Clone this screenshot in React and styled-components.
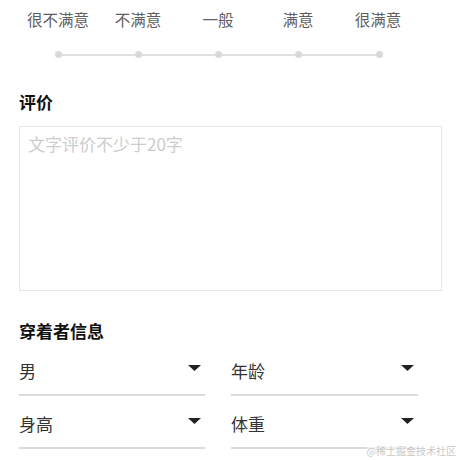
import React from "react";
import styled, { createGlobalStyle } from "styled-components";

const GlobalStyle = createGlobalStyle`
  html, body {
    margin: 0;
    padding: 0;
    background: #fff;
    font-family: "Noto Sans CJK SC", "Noto Sans", sans-serif;
  }
`;

const Page = styled.div`
  position: relative;
  width: 460px;
  height: 460px;
  box-sizing: border-box;
  padding: 7px 18px 0 19px;
  overflow: hidden;
`;

const Rating = styled.div`
  width: 400px;
`;

const Labels = styled.div`
  display: grid;
  grid-template-columns: repeat(5, 80px);
  margin-left: -1px;
`;

const Label = styled.span`
  text-align: center;
  font-size: 15.5px;
  line-height: 24px;
  color: #5e5e5e;
`;

const Track = styled.div`
  display: flex;
  align-items: center;
  margin: 20px 36.5px 0 35.5px;
`;

const Dot = styled.span`
  width: 7px;
  height: 7px;
  border-radius: 50%;
  background: #d9d9d9;
  flex: none;
`;

const Segment = styled.span`
  flex: 1;
  height: 2px;
  background: #e0e0e0;
`;

const SectionTitle = styled.h3`
  margin: ${(p) => p.$top}px 0 0;
  font-size: 17px;
  line-height: 24px;
  font-weight: 700;
  color: #111;
`;

const Comment = styled.textarea`
  display: block;
  box-sizing: border-box;
  width: 423px;
  height: 165px;
  margin-top: 12px;
  padding: 4px 8px;
  border: 1.5px solid #e6e6e6;
  border-radius: 0;
  resize: none;
  outline: none;
  font-family: "Noto Sans CJK SC", "Noto Sans", sans-serif;
  font-size: 17px;
  line-height: 26px;
  color: #333;
  &::placeholder {
    color: #cdcdcd;
  }
`;

const Fields = styled.div`
  display: grid;
  grid-template-columns: 186px 187px;
  column-gap: 26px;
`;

const Field = styled.div`
  display: flex;
  align-items: center;
  justify-content: space-between;
  height: 51px;
  border-bottom: 2px solid #dcdcdc;
  padding-right: 4px;
  font-size: 17px;
  color: #333;
  & > span {
    margin-top: 4px;
  }
`;

const Arrow = styled.svg`
  width: 13px;
  height: 6px;
  margin-top: -1px;
  flex: none;
`;

const Watermark = styled.span`
  position: absolute;
  right: 4px;
  bottom: 2px;
  font-size: 10px;
  color: #c8c8c8;
  background: rgba(255, 255, 255, 0.6);
`;

const levels = ["很不满意", "不满意", "一般", "满意", "很满意"];
const fields = ["男", "年龄", "身高", "体重"];

export default function App() {
  return (
    <>
      <GlobalStyle />
      <Page>
        <Rating>
          <Labels>
            {levels.map((l) => (
              <Label key={l}>{l}</Label>
            ))}
          </Labels>
          <Track>
            {levels.map((l, i) => (
              <React.Fragment key={l}>
                {i > 0 && <Segment />}
                <Dot />
              </React.Fragment>
            ))}
          </Track>
        </Rating>

        <SectionTitle $top={32}>评价</SectionTitle>
        <Comment placeholder="文字评价不少于20字" />

        <SectionTitle $top={28}>穿着者信息</SectionTitle>
        <Fields>
          {fields.map((f) => (
            <Field key={f}>
              <span>{f}</span>
              <Arrow viewBox="0 0 13 6">
                <path d="M0 0 H13 L6.5 6 Z" fill="#222" />
              </Arrow>
            </Field>
          ))}
        </Fields>
        <Watermark>@稀土掘金技术社区</Watermark>
      </Page>
    </>
  );
}
